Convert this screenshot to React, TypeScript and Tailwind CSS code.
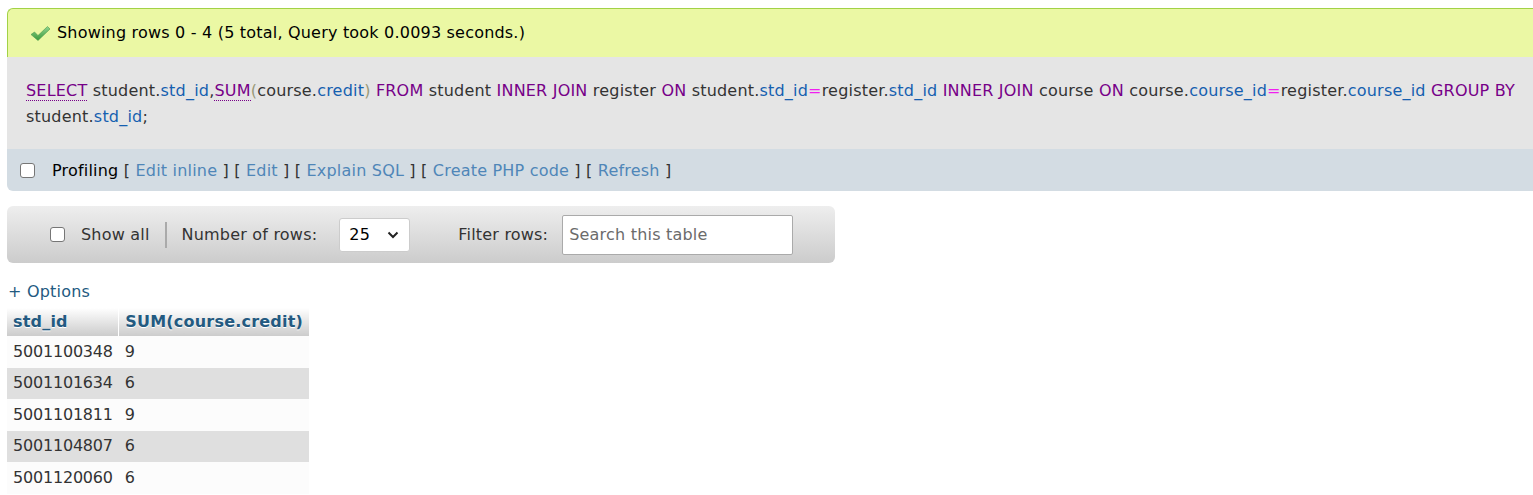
import React from "react";

const KW = "text-[#770088]";
const ID = "text-[#1560b0]";

function Kw({ children, link }: { children: React.ReactNode; link?: boolean }) {
  return (
    <span className={`${KW} ${link ? "border-b border-dotted border-[#770088]" : ""}`}>{children}</span>
  );
}

function Id({ children }: { children: React.ReactNode }) {
  return <span className={ID}>{children}</span>;
}

function Eq() {
  return <span className="text-[#f01ef0]">=</span>;
}

function Box({ className = "" }: { className?: string }) {
  return <span className={`inline-block w-[15px] h-[15px] rounded-[3px] border border-[#767676] bg-white ${className}`} />;
}

function CheckIcon() {
  return (
    <svg width="21" height="17" viewBox="0 0 21 17" className="shrink-0">
      <defs>
        <linearGradient id="g" x1="0" y1="0" x2="0" y2="1">
          <stop offset="0" stopColor="#8fd48f" />
          <stop offset="1" stopColor="#3a9a3a" />
        </linearGradient>
      </defs>
      <path d="M1 9.5 L4.5 7 L8 10.5 L17.5 1.5 L20 4 L8 15.5 Z" fill="url(#g)" stroke="#4a9a4a" strokeWidth="0.6" strokeLinejoin="round" />
    </svg>
  );
}

function Link({ children }: { children: React.ReactNode }) {
  return (
    <>
      <span className="text-[#333]">[ </span>
      <span className="text-[#4f86b8]">{children}</span>
      <span className="text-[#333]"> ]</span>
    </>
  );
}

const rows = [
  ["5001100348", "9"],
  ["5001101634", "6"],
  ["5001101811", "9"],
  ["5001104807", "6"],
  ["5001120060", "6"],
];

export default function App() {
  return (
    <div className="bg-white min-h-[495px] text-[16px] tracking-[0.2px] text-[#333] overflow-hidden" style={{ fontFamily: "'DejaVu Sans', Verdana, sans-serif" }}>
      <div className="pt-2 pl-[7px]">
        {/* success message */}
        <div className="h-[49px] flex items-center gap-[6px] pl-[22px] bg-[#ebf8a4] border-t border-l border-[#a2d246] rounded-tl-[6px] text-black">
          <CheckIcon />
          <span>Showing rows 0 - 4 (5 total, Query took 0.0093 seconds.)</span>
        </div>

        {/* sql */}
        <div className="bg-[#e5e5e5] px-[19px] pt-[21px] pb-[19px] leading-[26px]">
          <div className="whitespace-nowrap">
            <Kw link>SELECT</Kw> student.<Id>std_id</Id>,<Kw link>SUM</Kw>
            <span className="text-[#999977]">(</span>course.<Id>credit</Id>
            <span className="text-[#999977]">)</span> <Kw>FROM</Kw> student <Kw>INNER JOIN</Kw> register <Kw>ON</Kw> student.
            <Id>std_id</Id>
            <Eq />
            register.<Id>std_id</Id> <Kw>INNER JOIN</Kw> course <Kw>ON</Kw> course.<Id>course_id</Id>
            <Eq />
            register.<Id>course_id</Id> <Kw>GROUP BY</Kw>
          </div>
          <div>
            student.<Id>std_id</Id>;
          </div>
        </div>

        {/* profiling */}
        <div className="h-[42px] bg-[#d3dce3] rounded-bl-[6px] flex items-center pl-[13px] pt-[1px] gap-[17px] text-black">
          <Box />
          <span>
            Profiling <Link>Edit inline</Link> <Link>Edit</Link> <Link>Explain SQL</Link> <Link>Create PHP code</Link>{" "}
            <Link>Refresh</Link>
          </span>
        </div>
      </div>

      {/* navigation */}
      <div className="ml-[7px] mt-[15px] w-[828px] h-[57px] rounded-[6px] bg-gradient-to-b from-[#eeeeee] to-[#cccccc] flex items-center text-[#333]">
        <Box className="ml-[43px]" />
        <span className="ml-[16px]">Show all</span>
        <span className="ml-[15px] w-[2px] h-[26px] bg-[#aaaaaa]" />
        <span className="ml-[15px]">Number of rows:</span>
        <div className="ml-[22px] w-[71px] h-[34px] bg-white border border-[#cccccc] rounded-[3px] flex items-center justify-between pl-[9px] pr-[10px] text-black">
          <span>25</span>
          <svg width="12" height="8" viewBox="0 0 12 8">
            <path d="M1.5 1.5 L6 6 L10.5 1.5" fill="none" stroke="#222" strokeWidth="2" />
          </svg>
        </div>
        <span className="ml-[48px]">Filter rows:</span>
        <div className="ml-[14px] w-[231px] h-[40px] bg-white border border-[#aaaaaa] rounded-[2px] flex items-center pl-[6px] text-[#6b6b6b]">
          Search this table
        </div>
      </div>

      {/* options */}
      <div className="ml-[8px] mt-[19px] text-[#235a81] leading-[20px]">+ Options</div>

      {/* results */}
      <table className="ml-[7px] mt-[6px] border-collapse">
        <thead>
          <tr className="h-[28px]">
            <th className="text-left font-bold text-[#235a81] px-[6px] bg-gradient-to-b from-[#ffffff] to-[#cccccc] border-r border-white [text-shadow:0_1px_0_#fff]">std_id</th>
            <th className="text-left font-bold text-[#235a81] px-[6px] bg-gradient-to-b from-[#ffffff] to-[#cccccc] [text-shadow:0_1px_0_#fff]">SUM(course.credit)</th>
          </tr>
        </thead>
        <tbody>
          {rows.map((r, i) => (
            <tr key={r[0]} className={`h-[31.5px] tracking-[-0.2px] ${i % 2 ? "bg-[#dfdfdf]" : "bg-[#fcfcfc]"}`}>
              <td className="px-[6px] text-[#333]">{r[0]}</td>
              <td className="px-[6px] text-[#333]">{r[1]}</td>
            </tr>
          ))}
        </tbody>
      </table>
    </div>
  );
}
